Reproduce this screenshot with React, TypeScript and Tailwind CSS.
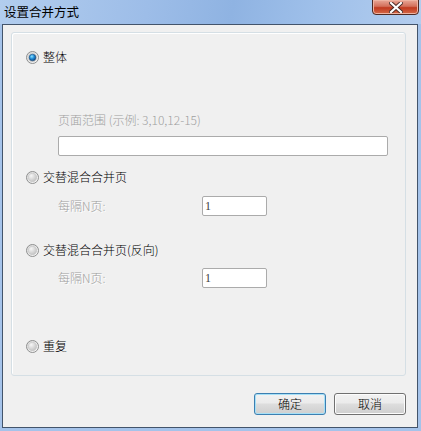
import React from 'react';

const cjk = { fontFamily: '"Noto Sans CJK SC", "Liberation Sans", sans-serif' };

function Radio({ checked }: { checked?: boolean }) {
    return (
        <svg width="13" height="13" viewBox="0 0 13 13" className="shrink-0">
            <defs>
                <linearGradient id="ring" x1="0" y1="0" x2="1" y2="1">
                    <stop offset="0" stopColor="#d6d6d6" />
                    <stop offset="1" stopColor="#fdfdfd" />
                </linearGradient>
                <radialGradient id="ball" cx="0.35" cy="0.3" r="0.8">
                    <stop offset="0" stopColor="#f6f6f6" />
                    <stop offset="1" stopColor="#bdbdbd" />
                </radialGradient>
                <radialGradient id="dot" cx="0.4" cy="0.35" r="0.7">
                    <stop offset="0" stopColor="#8fe3ff" />
                    <stop offset="0.5" stopColor="#1e8bd6" />
                    <stop offset="1" stopColor="#0b3f7a" />
                </radialGradient>
            </defs>
            <circle cx="6.5" cy="6.5" r="6" fill="url(#ring)" stroke="#8e8f8f" strokeWidth="1" />
            <circle cx="6.5" cy="6.5" r="4.2" fill="url(#ball)" stroke="#c4c4c4" strokeWidth="0.6" />
            {checked && <circle cx="6.5" cy="6.5" r="3.3" fill="url(#dot)" stroke="#1b4e7d" strokeWidth="0.6" />}
        </svg>
    );
}

function RadioRow({ label, checked }: { label: string; checked?: boolean }) {
    return (
        <div className="flex items-center h-[16px] pl-[14px]">
            <Radio checked={checked} />
            <span className="ml-[4px] text-[12px] leading-[16px] font-light text-black" style={cjk}>{label}</span>
        </div>
    );
}

function EveryRow({ mt }: { mt: string }) {
    return (
        <div className={`flex items-center h-[20px] pl-[46px] ${mt}`}>
            <span className="w-[144px] text-[12px] font-light text-[#a0a0a0] [text-shadow:1px_1px_0_#ffffff]" style={cjk}>每隔N页:</span>
            <div className="w-[65px] h-[20px] bg-white border border-[#ababab] rounded-[2px] flex items-center pl-[2px] text-[12px] text-[#404040]" style={{ fontFamily: '"Liberation Serif", serif' }}>
                1
            </div>
        </div>
    );
}

function WinButton({ label, primary }: { label: string; primary?: boolean }) {
    return (
        <button
            className={`w-[72px] h-[22px] rounded-[3px] border text-[12px] font-light text-black flex items-center justify-center bg-[linear-gradient(to_bottom,#f2f2f2_0%,#ebebeb_45%,#dddddd_50%,#cfcfcf_100%)] ${
                primary ? 'border-[#3c7fb1] shadow-[inset_0_0_0_1px_#a6e0f7]' : 'border-[#707070] shadow-[inset_0_0_0_1px_#fcfcfc]'
            }`}
            style={cjk}
        >
            {label}
        </button>
    );
}

export default function App() {
    return (
        <div className="w-[421px] h-[431px] flex flex-col bg-[#a5c3ea] overflow-hidden">
            <div className="h-[24px] flex items-start justify-between bg-[linear-gradient(100deg,#b2cdee_0%,#9dbde8_35%,#8fb3e2_55%,#9fc0ea_75%,#b3cdee_100%)]">
                <span className="ml-[4px] mt-[3px] text-[12.5px] leading-[18px] font-normal text-black" style={cjk}>设置合并方式</span>
                <div className="mr-[2px] w-[47px] h-[16px] -mt-[1px] rounded-b-[4px] border border-[#4e2a24] bg-[linear-gradient(to_bottom,#e9a797_0%,#d3705b_45%,#c1391f_55%,#d46a48_100%)] shadow-[inset_0_0_0_1px_#eeb3a2] flex items-center justify-center">
                    <svg width="14" height="11" viewBox="0 0 14 11">
                        <path d="M2 1 L12 10 M12 1 L2 10" stroke="#4a2a26" strokeWidth="4" strokeLinecap="square" />
                        <path d="M2 1 L12 10 M12 1 L2 10" stroke="#ffffff" strokeWidth="2.2" strokeLinecap="square" />
                    </svg>
                </div>
            </div>
            <div className="flex-1 ml-[2px] mr-[3px] mb-[3px] border border-[#43546b] bg-[#f0f0f0] flex flex-col">
                <div className="ml-[8px] mr-[11px] mt-[7px] h-[344px] border border-[#d5dfe5] rounded-[3px] shadow-[inset_1px_1px_0_#ffffff] flex flex-col pt-[16px]">
                    <RadioRow label="整体" checked />
                    <div className="mt-[47px] pl-[46px] h-[16px] text-[12px] leading-[16px] font-light text-[#a0a0a0]" style={cjk}>
                        页面范围 (示例: 3,10,12-15)
                    </div>
                    <div className="mt-[8px] ml-[46px] w-[330px] h-[20px] bg-white border border-[#ababab] rounded-[2px]" />
                    <div className="mt-[13px]">
                        <RadioRow label="交替混合合并页" />
                    </div>
                    <EveryRow mt="mt-[11px]" />
                    <div className="mt-[26px]">
                        <RadioRow label="交替混合合并页(反向)" />
                    </div>
                    <EveryRow mt="mt-[10px]" />
                    <div className="mt-[50px]">
                        <RadioRow label="重复" />
                    </div>
                </div>
                <div className="flex justify-end gap-[8px] mt-[17px] mr-[11px]">
                    <WinButton label="确定" primary />
                    <WinButton label="取消" />
                </div>
            </div>
        </div>
    );
}
